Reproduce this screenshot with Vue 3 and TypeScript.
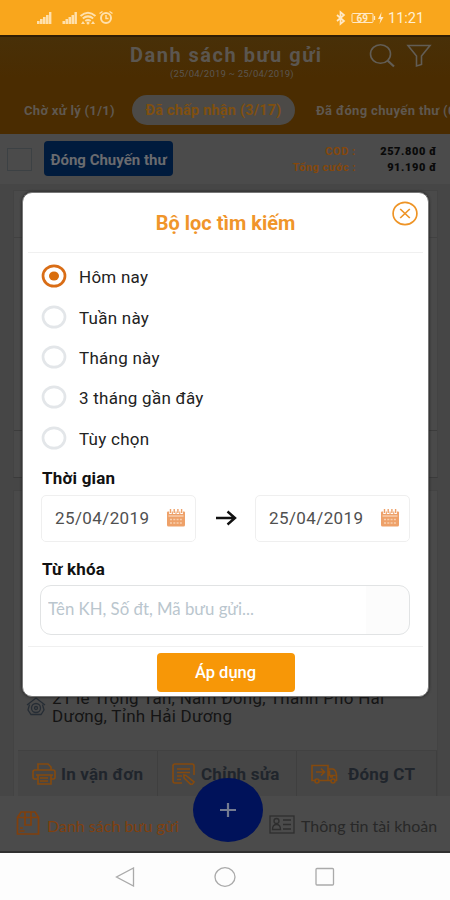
<script setup lang="ts">
import { ref } from 'vue'

const options: string[] = ['Hôm nay', 'Tuần này', 'Tháng này', '3 tháng gần đây', 'Tùy chọn']
const selected = ref(0)
const keyword = ref('')
const dates: string[] = ['25/04/2019', '25/04/2019']
</script>

<template>
  <div class="phone">
    <div class="status">
      <svg class="st-left" width="90" height="16" viewBox="0 0 90 16" fill="#ffe0ac">
        <g>
          <rect x="1" y="11" width="2.6" height="3" /><rect x="4" y="9" width="2.6" height="5" />
          <rect x="7" y="7" width="2.6" height="7" /><rect x="10" y="5" width="2.6" height="9" />
          <rect x="13" y="2" width="2.4" height="12" />
        </g>
        <g transform="translate(25.500 0)">
          <rect x="1" y="11" width="2.6" height="3" /><rect x="4" y="9" width="2.6" height="5" />
          <rect x="7" y="7" width="2.6" height="7" /><rect x="10" y="5" width="2.6" height="9" />
          <rect x="13" y="2" width="2.4" height="12" />
        </g>
        <g fill="none" stroke="#ffe0ac" stroke-width="2">
          <path d="M44.500 6Q52 -.5 59.500 6M46.800 8.500Q52 4.200 57.200 8.500M49.300 11Q52 9 54.700 11" />
          <circle cx="70" cy="8" r="5" /><path d="M70 5v3.500h2.500M63.500 3.500l3-2M76.500 3.500l-3-2" stroke-width="1.500" />
        </g>
        <circle cx="52" cy="13" r="1.500" /><path d="M57 11l2 3h-4zM47 11l2 3h-4z" />
      </svg>
      <div class="st-right">
        <svg width="48" height="16" viewBox="0 0 48 16" fill="none" stroke="#ffe9c6" stroke-width="1.300">
          <path d="M1 5l7 6-3.500 3V2L8 5l-7 6" stroke-width="1.700" />
          <rect x="16" y="3.500" width="21" height="9" rx="1" stroke-width="1" /><path d="M38.500 6v4" />
          <path d="M45.500 2l-3.500 7h2.500l-1 5 4-7h-2.500z" fill="#ffe9c6" stroke="none" />
          <text x="20.500" y="11.500" font-family="Roboto" font-size="10" font-weight="700" fill="#ffe9c6" stroke="none">69</text>
        </svg>
        <span>11:21</span>
      </div>
    </div>

    <div class="app">
      <header class="header">
        <div class="head-row">
          <div class="titles">
            <h1>Danh sách bưu gửi</h1>
            <p>(25/04/2019 ~ 25/04/2019)</p>
          </div>
          <svg class="head-icons" width="64" height="26" viewBox="0 0 64 26" fill="none" stroke="#625d55" stroke-width="1.600">
            <ellipse cx="11.500" cy="11" rx="10" ry="9.300" /><path d="M18.500 17.500l6.500 6" stroke-width="2.200" />
            <path d="M39 2.500h22l-8.500 10.500v8.500l-5 1.500v-10z" />
          </svg>
        </div>
        <nav class="tabs">
          <span class="tab first">Chờ xử lý (1/1)</span>
          <span class="tab active">Đã chấp nhận (3/17)</span>
          <span class="tab last">Đã đóng chuyến thư (0/2)</span>
        </nav>
      </header>

      <div class="toolbar">
        <i class="check"></i>
        <button class="close-trip">Đóng Chuyến thư</button>
        <div class="totals">
          <span class="k">COD :</span><b>257.800 đ</b>
          <span class="k tight">Tổng cước :</span><b>91.190 đ</b>
        </div>
      </div>

      <main class="list">
        <section class="card one"><div class="inner"></div></section>
        <section class="card two">
          <div class="address">
            <svg width="20" height="19" viewBox="0 0 20 19" fill="none" stroke="#262d35" stroke-width="1.300">
              <path d="M1 8L10 1l9 7M3.500 7.500L2 13l3 4.500h10l3-4.500-1.500-5.500" />
              <circle cx="10" cy="11" r="4.500" /><circle cx="10" cy="11" r="1.500" />
            </svg>
            <p>21 lê Trọng Tấn, Nam Đồng, Thành Phố Hải<br>Dương, Tỉnh Hải Dương</p>
          </div>
          <div class="actions">
            <div class="act a1">
              <svg width="24" height="22" viewBox="0 0 24 22" fill="none" stroke="#854a0e" stroke-width="1.600">
                <path d="M6 7V1h10l3 3v3M5 16H2.500Q1 16 1 14V9q0-2 2-2h18q2 0 2 2v5q0 2-1.500 2H19M6 12h13v9H6zM4 12h17M8 15h8M8 18h8" />
              </svg>
              <span>In vận đơn</span>
            </div>
            <div class="act a2">
              <svg width="24" height="22" viewBox="0 0 24 22" fill="none" stroke="#854a0e" stroke-width="1.600">
                <path d="M10 20H3q-2 0-2-2V3q0-2 2-2h17q2 0 2 2v9M5 6h13M5 9.500h13M5 13h5M5 16.500h4" />
                <path d="M12 12l2 .5 8 6.500-1.500 2-2 .2L12 15z" />
              </svg>
              <span>Chỉnh sửa</span>
            </div>
            <div class="act a3">
              <svg width="27" height="20" viewBox="0 0 27 20" fill="none" stroke="#854a0e" stroke-width="1.600">
                <path d="M4 16.500H1V1.500h16v15H8M17 5h5q3 1 3.500 6v5.500h-1.500M20 16.500h-3M18.500 6.500v5h6M5 8h8M10 4.500L13.500 8 10 11.500M19 13h3" />
                <circle cx="6" cy="17" r="2" /><circle cx="22" cy="17" r="2" />
              </svg>
              <span>Đóng CT</span>
            </div>
          </div>
        </section>
      </main>

      <footer class="bottom">
        <div class="bt left">
          <svg width="24" height="26" viewBox="0 0 24 26" fill="none" stroke="#80400e" stroke-width="1.700">
            <path d="M1.500 7.500h21V24h-21zM1.500 7.500L5 2h14l3.500 5.500M9 2v13h6V2M3.500 21h5M4 18h3" />
          </svg>
          <span>Danh sách bưu gửi</span>
        </div>
        <div class="bt right">
          <svg width="26" height="19" viewBox="0 0 26 19" fill="none" stroke="#2e2e2e" stroke-width="1.300">
            <rect x="1" y="1" width="24" height="17" /><circle cx="7.500" cy="6" r="2.500" />
            <path d="M3.500 14.500q0-5 4-5t4 5zM14 5h8M14 9.500h8M14 14h8" />
          </svg>
          <span>Thông tin tài khoản</span>
        </div>
        <button class="fab">
          <svg width="18" height="16" viewBox="0 0 18 16" stroke="#747b90" stroke-width="2.200"><path d="M9 1v14M1 8h16" /></svg>
        </button>
      </footer>

      <div class="modal">
        <div class="m-head">
          <h2>Bộ lọc tìm kiếm</h2>
          <svg class="m-close" width="26" height="25" viewBox="0 0 26 25" fill="none" stroke="#ee9426" stroke-width="1.700">
            <ellipse cx="13" cy="12.500" rx="11.900" ry="11.200" /><path d="M8.200 8l9.600 9M17.800 8l-9.600 9" />
          </svg>
        </div>
        <div class="options">
          <label v-for="(o, i) in options" :key="o" class="option" @click="selected = i">
            <svg width="26" height="24" viewBox="0 0 26 24" fill="none">
              <ellipse cx="13" cy="12" rx="11" ry="10.200" :stroke="selected === i ? '#d96d16' : '#e3e6e9'" stroke-width="2.700" />
              <ellipse v-if="selected === i" cx="13" cy="12" rx="5" ry="4.600" fill="#d96d0c" />
            </svg>
            <span>{{ o }}</span>
          </label>
        </div>
        <h3 class="time">Thời gian</h3>
        <div class="dates">
          <template v-for="(d, i) in dates" :key="i">
            <svg v-if="i > 0" class="arrow" width="22" height="18" viewBox="0 0 22 18" fill="none" stroke="#111" stroke-width="2.400">
              <path d="M1 8h18M12.500 1.500L20 8l-7.500 6.500" />
            </svg>
            <div class="date">
              <span>{{ d }}</span>
              <svg width="20" height="18" viewBox="0 0 20 18">
                <path d="M1 3.500q0-1 1-1h16q1 0 1 1V16q0 1.500-1.500 1.500h-15Q1 17.500 1 16z" fill="#eea169" />
                <path d="M4.500 0v5M8.200 0v5M11.900 0v5M15.600 0v5" stroke="#fff" stroke-width="2.600" />
                <path d="M4.500 0v4M8.200 0v4M11.900 0v4M15.600 0v4" stroke="#eea169" stroke-width="1.400" />
                <path d="M2.500 7h15" stroke="#fbe3d0" stroke-width="1.200" />
                <path d="M4 10.500h12M4 14h12" stroke="#f8cfae" stroke-width="1.400" stroke-dasharray="2 1.300" />
              </svg>
            </div>
          </template>
        </div>
        <h3 class="key">Từ khóa</h3>
        <input v-model="keyword" class="keyword" placeholder="Tên KH, Số đt, Mã bưu gửi...">
        <div class="m-foot"><button>Áp dụng</button></div>
      </div>
    </div>

    <div class="sysnav">
      <svg width="20" height="20" viewBox="0 0 20 20"><path d="M18.500 1v18L1.500 10z" /></svg>
      <svg width="22" height="20" viewBox="0 0 22 20"><ellipse cx="11" cy="10" rx="10" ry="9.300" /></svg>
      <svg width="20" height="20" viewBox="0 0 20 20"><rect x="1" y="1.500" width="17.500" height="16.500" rx="1" /></svg>
    </div>
  </div>
</template>

<style>
body { margin: 0; }
</style>

<style scoped>
* { box-sizing: border-box; }
h1, h2, h3, p { margin: 0; }
svg { display: block; flex: none; }
button { border: 0; padding: 0; font-family: inherit; }
.phone { width: 450px; height: 900px; display: flex; flex-direction: column; overflow: hidden; font-family: Roboto, "Noto Sans", sans-serif; white-space: nowrap; background: #fdfdfd; }
.status { height: 35px; flex: none; background: #f9a61c; display: flex; justify-content: space-between; padding: 10px 27px 0 36px; }
.st-right { display: flex; gap: 4px; color: #fff0d5; font-size: 14.500px; line-height: 17px; }
.st-right span { width: 35px; }
.app { position: relative; height: 818px; flex: none; background: #4a4a4a; display: flex; flex-direction: column; border-bottom: 2px solid #303030; overflow: hidden; }
.header { height: 99px; flex: none; border-top: 2px solid #301e04; background: linear-gradient(#483008, #4a2c01 40px); }
.head-row { display: flex; height: 58px; padding: 6px 17px 0 130px; justify-content: space-between; }
.titles { width: 194px; color: #5b5650; }
h1 { font-size: 20px; line-height: 24px; font-weight: 700; letter-spacing: 1.500px; }
.titles p { font-size: 9.500px; line-height: 12px; margin-top: 1px; letter-spacing: .2px; padding-left: 40px; }
.tabs { display: flex; align-items: center; height: 30px; overflow: hidden; font-size: 13px; font-weight: 700; color: #5f5850; }
.tab { flex: none; }
.tab.first { width: 132px; padding-left: 24px; letter-spacing: .3px; }
.tab.active { width: 163px; height: 30px; line-height: 31px; border-radius: 15px; background: #4c4a47; color: #80500f; text-align: center; font-size: 14.500px; letter-spacing: .2px; }
.tab.last { padding-left: 21px; letter-spacing: .35px; }
.toolbar { height: 50px; flex: none; display: flex; align-items: flex-start; padding: 7px 13px 0 7px; background: #4b4b4b; }
.check { width: 25px; height: 23px; margin-top: 7px; border: 1px solid #3c4144; }
.close-trip { width: 129px; height: 35px; margin-left: 12px; border-radius: 4px; background: #001b3d; color: #6a6b6f; font-size: 15px; font-weight: 700; padding-top: 2px; }
.totals { margin-left: auto; display: grid; grid-template-columns: 80px 70px; column-gap: 11px; text-align: right; font-size: 11px; line-height: 16px; padding-top: 3px; font-weight: 700; }
.totals b { color: #090909; letter-spacing: .6px; }
.k { color: #85480c; letter-spacing: .6px; }
.k.tight { letter-spacing: .5px; }
.list { flex: 1; padding: 6px 12px 0 13px; background: #464646; display: flex; flex-direction: column; gap: 12px; }
.card { background: #4a4a4a; border: 1px solid #434343; }
.one { height: 288px; padding-top: 46px; border-bottom-color: #3b3b3b; }
.inner { height: 194px; border-top: 1px solid #414141; border-bottom: 1px solid #3c3c3c; }
.two { flex: 1; display: flex; flex-direction: column; border-bottom: 0; }
.address { margin-top: 198px; display: flex; gap: 6px; padding-left: 12px; height: 61px; color: #141414; font-size: 17px; letter-spacing: .25px; line-height: 18px; }
.address svg { margin-top: 8px; }
.actions { flex: 1; display: flex; margin-left: 4px; background: #464646; border-top: 1px solid #414141; color: #20252c; font-size: 17px; font-weight: 700; }
.act { display: flex; align-items: center; border-right: 1px solid #3f3f3f; padding-left: 14px; gap: 5px; }
.act span { padding-top: 1px; letter-spacing: .2px; }
.a1 { width: 140px; }
.a2 { width: 139px; }
.a3 { width: 140px; gap: 10px; }
.bottom { position: relative; height: 55px; flex: none; display: flex; align-items: center; background: #4b4b4b; font-family: Lato, "Noto Sans", sans-serif; font-size: 16px; }
.bt { display: flex; align-items: center; padding-top: 4px; }
.left { width: 269px; padding-left: 16px; gap: 7px; color: #80400e; }
.right { gap: 6px; color: #282828; }
.left svg { margin-top: -5px; }
.right svg { margin-top: -3px; }
.fab { position: absolute; left: 193px; top: -18px; width: 70px; height: 64px; border-radius: 50%; background: #00125a; display: flex; align-items: center; justify-content: center; }
.modal { position: absolute; left: 22px; top: 157px; width: 407px; height: 505px; background: #fff; border: 1px solid #777; border-radius: 10px; box-shadow: 0 0 3px #1c1c1c; overflow: hidden; padding: 0 5px; display: flex; flex-direction: column; }
.m-head { position: relative; height: 60px; flex: none; border-bottom: 1px solid #f0f0f0; text-align: center; }
h2 { color: #f0952a; font-size: 20px; line-height: 24px; padding-top: 18px; font-weight: 700; }
.m-close { position: absolute; right: 5px; top: 8px; }
.options { padding: 3px 0 0 13px; height: 209px; }
.option { display: flex; align-items: center; gap: 12px; height: 40.400px; font-size: 17px; color: #222; letter-spacing: .25px; }
.option span { padding-top: 2px; }
h3 { font-size: 17px; line-height: 20px; font-weight: 700; color: #111; padding-left: 14px; letter-spacing: .2px; }
.time { margin-top: 6px; }
.dates { display: flex; align-items: center; padding: 0 13px 0 13px; justify-content: space-between; margin-top: 7px; }
.date { width: 155px; height: 47px; border: 1px solid #efefef; border-radius: 5px; display: flex; align-items: center; justify-content: space-between; padding: 0 9px 2px 13px; color: #505050; font-size: 17px; letter-spacing: .4px; }
.keyword { display: block; width: 370px; height: 50px; margin: 6px 0 0 12px; border: 1.500px solid #e1e3e4; border-radius: 11px; padding: 0 7px 4px; font-family: Lato, "Noto Sans", sans-serif; font-size: 16.800px; background: linear-gradient(90deg, #fff 325px, #fcfcfc 325px); outline: 0; }
.keyword::placeholder { color: #bac6ce; opacity: 1; }
.key { margin-top: 17px; }
.m-foot { margin-top: 11px; border-top: 1px solid #f0f0f0; display: flex; justify-content: center; padding-top: 6px; }
.m-foot button { width: 138px; height: 39px; border-radius: 4px; background: #f79707; color: #fff; font-size: 16.500px; font-weight: 500; }
.sysnav { flex: 1; background: #fdfdfd; display: flex; padding: 14px 115px 0; justify-content: space-between; }
.sysnav svg { fill: none; stroke: #aaa; stroke-width: 1.300; }
</style>
